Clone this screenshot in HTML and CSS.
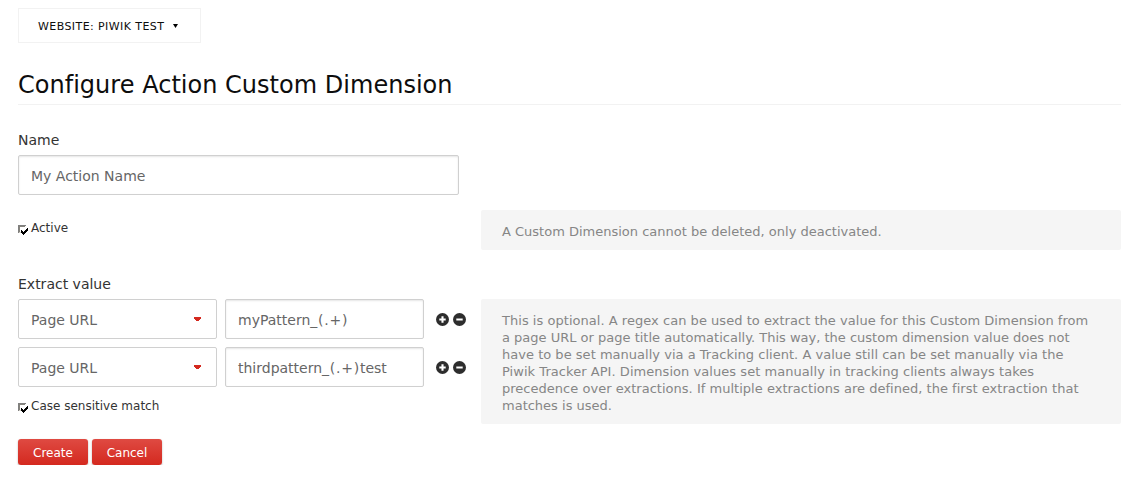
FILE: index.html
```html
<!DOCTYPE html>
<html lang="en">
<head>
<meta charset="utf-8">
<title>Configure Action Custom Dimension</title>
<link rel="stylesheet" href="styles.css">
</head>
<body>
<svg class="defs" width="0" height="0" aria-hidden="true">
  <symbol id="plus" viewBox="0 0 13 13"><circle cx="6.5" cy="6.5" r="6.5" fill="#2d2d2d"/><path d="M6.5 3.3v6.4M3.3 6.5h6.4" stroke="#fff" stroke-width="2.1"/></symbol>
  <symbol id="minus" viewBox="0 0 13 13"><circle cx="6.5" cy="6.5" r="6.5" fill="#2d2d2d"/><path d="M3.3 6.5h6.4" stroke="#fff" stroke-width="2"/></symbol>
  <symbol id="check" viewBox="0 0 10 10" shape-rendering="crispEdges"><path d="M0 0h8v1H1v7H0z" fill="#808080"/><path d="M1 1h6v1H2v5H1z" fill="#85837c"/><path d="M1 7h3v1H1z" fill="#d4d0c8"/><path d="M3 5h1v1h1v1h1V6h1V5h1V4h1V3h1v3H9v1H8v1H7v1H6v1H5V9H4V8H3z" fill="#000"/></symbol>
  <symbol id="caret" viewBox="0 0 7 4" shape-rendering="crispEdges"><path d="M0 0h7v2H6v1H5v1H2V3H1V2H0z" fill="#d4291f"/></symbol>
</svg>
<div class="selector">WEBSITE: PIWIK TEST <svg class="selector-arrow" viewBox="0 0 5 4"><path d="M0 0h5L2.5 4z"/></svg></div>
<h1 class="title">Configure Action Custom Dimension</h1>
<form class="form">
  <div class="label">Name</div>
  <div class="field name-field">My Action Name</div>
  <div class="row active-row">
    <div class="controls checkbox active"><svg><use href="#check"/></svg><span>Active</span></div>
    <div class="help">A Custom Dimension cannot be deleted, only deactivated.</div>
  </div>
  <div class="label extract-label">Extract value</div>
  <div class="row">
    <div class="controls">
      <div class="extraction">
        <div class="field select">Page URL<svg><use href="#caret"/></svg></div>
        <div class="field">myPattern<span class="regex">_(.+)</span></div>
        <div class="icons"><svg><use href="#plus"/></svg><svg><use href="#minus"/></svg></div>
      </div>
      <div class="extraction">
        <div class="field select">Page URL<svg><use href="#caret"/></svg></div>
        <div class="field">thirdpattern<span class="regex">_(.+)</span>test</div>
        <div class="icons"><svg><use href="#plus"/></svg><svg><use href="#minus"/></svg></div>
      </div>
      <div class="checkbox case"><svg><use href="#check"/></svg><span>Case sensitive match</span></div>
    </div>
    <div class="help"><span class="wide">This is optional. A regex can be used to extract the value for this Custom Dimension from</span><br>a page URL or page title automatically. This way, the custom dimension value does not<br><span class="loose">have to be set manually via a Tracking client. A value still can be set manually via the</span><br><span class="wider">Piwik Tracker API. Dimension values set manually in tracking clients always takes</span><br><span class="loose">precedence over extractions. If multiple extractions are defined, the first extraction that</span><br>matches is used.</div>
  </div>
  <div class="buttons"><button class="button" type="button">Create</button><button class="button" type="button">Cancel</button></div>
</form>
</body>
</html>
```
FILE: styles.css
```css
* { box-sizing: border-box; }
body {
  margin: 0;
  padding: 8px 5px 0 18px;
  background: #fff;
  color: #333;
  font-family: "DejaVu Sans", sans-serif;
  font-variant-ligatures: none;
}
.defs { position: absolute; }
svg { display: block; flex: none; }
.selector {
  display: flex;
  align-items: center;
  width: 183px;
  height: 35px;
  padding: 2px 0 0 19px;
  border: 1px solid #f2f2f2;
  color: #0d0d0d;
  font-size: 11px;
  letter-spacing: .42px;
}
.selector-arrow { width: 5px; height: 4px; margin: 0 0 1px 9px; }
.title {
  height: 62px;
  margin: 0;
  padding-top: 28px;
  border-bottom: 1px solid #f2f2f2;
  color: #0d0d0d;
  font-size: 24px;
  font-weight: 400;
  line-height: 28px;
  letter-spacing: .02px;
}
.label { height: 23px; margin-top: 27px; font-size: 14px; line-height: 17px; }
.field {
  display: flex;
  align-items: center;
  width: 199px;
  height: 40px;
  padding: 2px 12px 0;
  border: 1px solid #d0d0d0;
  border-radius: 2px;
  box-shadow: inset 0 1px 2px rgba(0, 0, 0, .1);
  color: #666;
  font-size: 14px;
  white-space: nowrap;
}
.regex { letter-spacing: .75px; }
.name-field { width: 441px; }
.select { justify-content: space-between; padding-right: 15px; box-shadow: none; }
.select svg { width: 7px; height: 4px; margin-bottom: 2px; }
.row { display: flex; align-items: flex-start; }
.active-row { margin-top: 15px; }
.controls { width: 463px; }
.checkbox { display: flex; font-size: 12px; line-height: 14px; }
.checkbox svg { width: 10px; height: 10px; margin: 4px 3px 0 0; }
.active { padding-top: 11px; }
.case { height: 14px; margin-top: 12px; }
.help {
  width: 640px;
  padding: 13px 21px 10px;
  border-radius: 2px;
  background: #f5f5f5;
  color: #868686;
  font-size: 13px;
  line-height: 17px;
  white-space: nowrap;
}
.loose { letter-spacing: .02px; }
.wide { letter-spacing: .034px; }
.wider { letter-spacing: .048px; }
.extract-label { margin-top: 26px; }
.extraction { display: flex; gap: 8px; margin-bottom: 8px; }
.icons { display: flex; align-items: center; gap: 4.4px; margin-left: 4px; }
.icons svg { width: 13px; height: 13px; }
.buttons { display: flex; gap: 4px; margin-top: 15px; }
.button {
  width: 70px;
  height: 26px;
  padding: 1px 0 0;
  border: 0;
  border-radius: 3px;
  background: linear-gradient(#df4a42, #d4291f);
  box-shadow: 0 1px 2px rgba(0, 0, 0, .3);
  color: #fff;
  font: 12px "DejaVu Sans", sans-serif;
}
```
